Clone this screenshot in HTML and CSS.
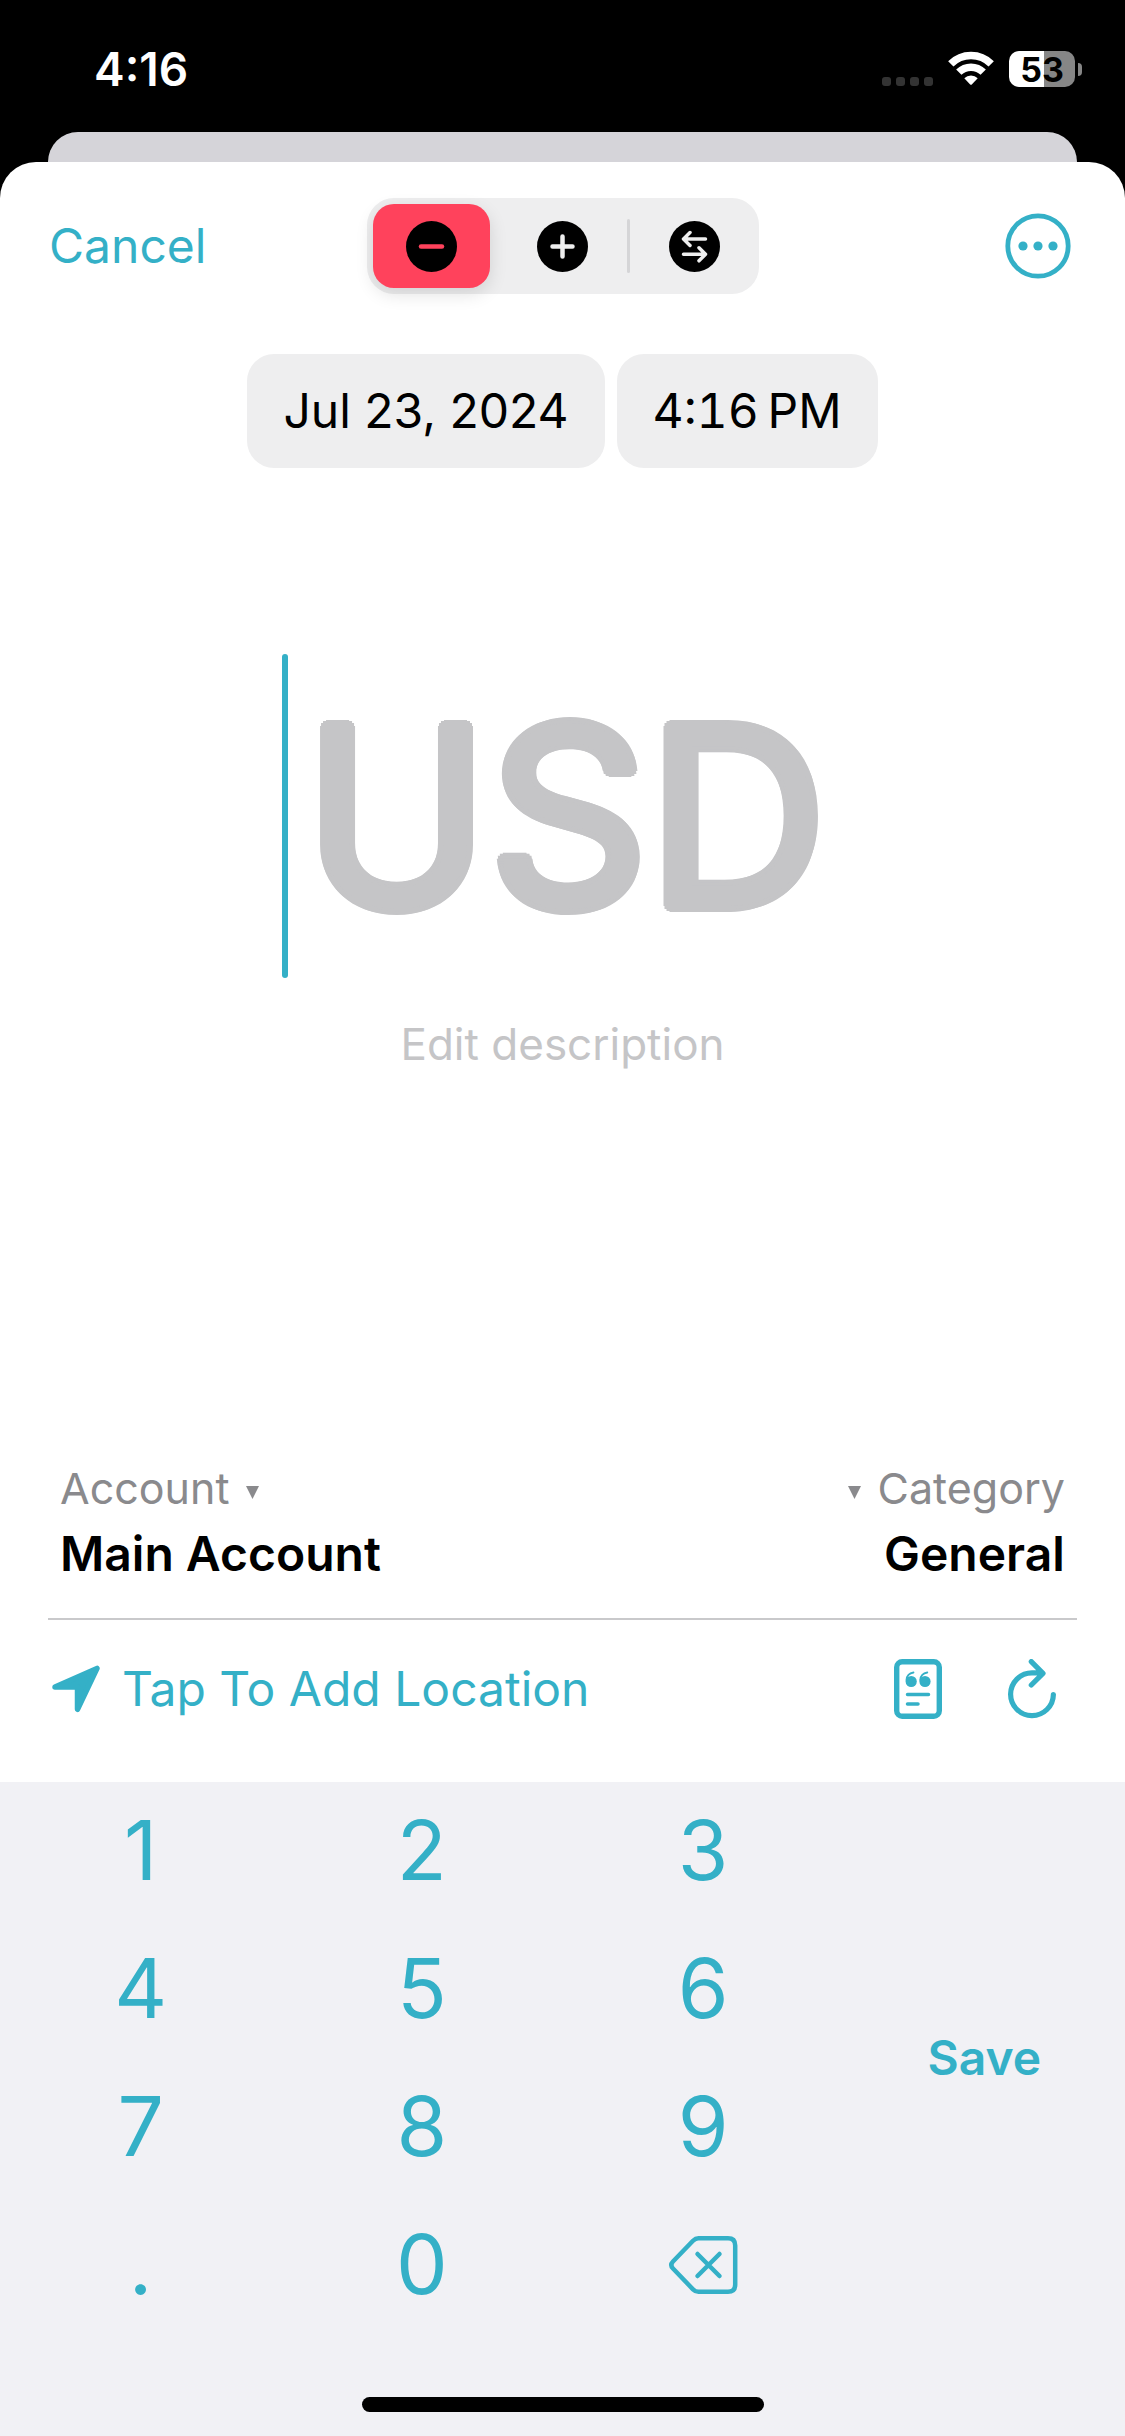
FILE: index.html
```html
<!DOCTYPE html>
<html lang="en">
<head>
<meta charset="utf-8">
<meta name="viewport" content="width=device-width, initial-scale=1">
<title>New Transaction</title>
<link rel="stylesheet" href="styles.css">
</head>
<body>
<div class="status-bar">
  <span class="status-time">4:16</span>
  <div class="status-icons">
    <svg class="signal" viewBox="0 0 52 36" aria-hidden="true"><g fill="#333"><rect x="0" y="26" width="9" height="9" rx="3"/><rect x="14" y="26" width="9" height="9" rx="3"/><rect x="28" y="26" width="9" height="9" rx="3"/><rect x="42" y="26" width="9" height="9" rx="3"/></g></svg>
    <svg class="wifi" viewBox="0 0 46 36" aria-hidden="true"><g fill="none" stroke="#fff" stroke-width="7.500"><path d="M2.800 12.800A28.500 28.500 0 0 1 43.200 12.800"/><path d="M10.800 21.200A17.300 17.300 0 0 1 35.200 21.200"/></g><path d="M16.300 27.300A9.500 9.500 0 0 1 29.700 27.300L23.800 33.400Q23 34.200 22.200 33.400Z" fill="#fff"/></svg>
    <div class="battery"><span class="battery-level">53</span><span class="battery-tip"></span></div>
  </div>
</div>
<div class="back-card"></div>
<main class="sheet">
  <header class="toolbar">
    <button class="link-button cancel" type="button">Cancel</button>
    <div class="segments" role="radiogroup" aria-label="Transaction type">
      <label class="segment segment-first"><input class="segment-input" type="radio" name="type" aria-label="Expense" checked>
        <svg class="segment-icon" viewBox="0 0 51 51" aria-hidden="true"><circle cx="25.500" cy="25.500" r="25.500"/><path d="M15 25.500H36" fill="none" stroke="#ff425c" stroke-width="4.500" stroke-linecap="round"/></svg></label>
      <label class="segment"><input class="segment-input" type="radio" name="type" aria-label="Income">
        <svg class="segment-icon" viewBox="0 0 51 51" aria-hidden="true"><circle cx="25.500" cy="25.500" r="25.500"/><path d="M15.500 25.500H35.500M25.500 15.500V35.500" fill="none" stroke="#eee" stroke-width="4.500" stroke-linecap="round"/></svg></label>
      <span class="segment-divider"></span>
      <label class="segment"><input class="segment-input" type="radio" name="type" aria-label="Transfer">
        <svg class="segment-icon" viewBox="0 0 51 51" aria-hidden="true"><circle cx="25.500" cy="25.500" r="25.500"/><path d="M36.500 18H15M21 11.500L14.500 18L21 24.500M14.500 33.300H36M30 26.800L36.500 33.300L30 39.800" fill="none" stroke="#eee" stroke-width="3.500" stroke-linecap="round" stroke-linejoin="round"/></svg></label>
    </div>
    <button class="icon-button more" type="button" aria-label="More options">
      <svg class="more-icon" viewBox="0 0 66 66" aria-hidden="true"><circle cx="33" cy="33" r="30.200" fill="none" stroke="currentColor" stroke-width="4.800"/><g fill="currentColor"><circle cx="18" cy="33" r="4.600"/><circle cx="33" cy="33" r="4.600"/><circle cx="48" cy="33" r="4.600"/></g></svg>
    </button>
  </header>

  <div class="date-row">
    <button class="pill" type="button">Jul 23, 2024</button>
    <button class="pill pill-time" type="button">4:16&#8239;PM</button>
  </div>

  <div class="amount">
    <span class="caret"></span>
    <input class="amount-input" type="text" inputmode="decimal" placeholder="USD" aria-label="Amount">
  </div>
  <input class="description" type="text" placeholder="Edit description" aria-label="Description">

  <div class="details">
    <div class="field">
      <label class="field-label" for="account">Account
        <svg class="arrow" viewBox="0 0 13 13" aria-hidden="true"><path d="M0 0H13L6.500 13Z" fill="currentColor"/></svg></label>
      <select class="field-select" id="account"><option>Main Account</option></select>
    </div>
    <div class="field field-end">
      <label class="field-label" for="category"><svg class="arrow" viewBox="0 0 13 13" aria-hidden="true"><path d="M0 0H13L6.500 13Z" fill="currentColor"/></svg>
        Category</label>
      <select class="field-select" id="category"><option>General</option></select>
    </div>
  </div>

  <div class="actions">
    <button class="link-button location" type="button">
      <svg class="location-icon" viewBox="0 0 48 48" aria-hidden="true"><path d="M3 22L45 3.400L25.500 44.300V22Z" fill="currentColor" stroke="currentColor" stroke-width="5.500" stroke-linejoin="round"/></svg>
      Tap To Add Location
    </button>
    <div class="action-icons">
      <button class="icon-button" type="button" aria-label="Add note">
        <svg class="action-icon" viewBox="0 0 48 60" aria-hidden="true"><rect x="2.700" y="2.700" width="42.600" height="54.600" rx="5.500" fill="none" stroke="currentColor" stroke-width="5.400"/><g fill="currentColor"><circle cx="17.200" cy="22.500" r="5.600"/><circle cx="31" cy="22.500" r="5.600"/></g><path d="M12.500 21Q13 14.500 19.500 13.500M26.300 21Q26.800 14.500 33.300 13.500" fill="none" stroke="currentColor" stroke-width="1.800" stroke-linecap="round"/><path d="M13.500 35.500H34.500M13.500 45H24" fill="none" stroke="currentColor" stroke-width="3.500" stroke-linecap="round"/></svg>
      </button>
      <button class="icon-button" type="button" aria-label="Repeat">
        <svg class="action-icon" viewBox="0 0 48 60" aria-hidden="true"><path d="M45.400 35.500A21.400 21.400 0 1 1 24 13.800H34M23.300 2.600L35 14.300L23.300 26" fill="none" stroke="currentColor" stroke-width="5.200" stroke-linecap="round" stroke-linejoin="round"/></svg>
      </button>
    </div>
  </div>
</main>
<section class="keyboard" aria-label="Keypad">
  <div class="keys">
    <button class="key" type="button">1</button>
    <button class="key" type="button">2</button>
    <button class="key" type="button">3</button>
    <button class="save" type="submit">Save</button>
    <button class="key" type="button">4</button>
    <button class="key" type="button">5</button>
    <button class="key" type="button">6</button>
    <button class="key" type="button">7</button>
    <button class="key" type="button">8</button>
    <button class="key" type="button">9</button>
    <button class="key" type="button">.</button>
    <button class="key" type="button">0</button>
    <button class="key" type="button" aria-label="Delete"><svg class="delete-icon" viewBox="0 0 70 60" aria-hidden="true"><g fill="none" stroke="currentColor" stroke-width="4.500" stroke-linecap="round" stroke-linejoin="round"><path d="M30.500 3.200H60Q67.200 3.200 67.200 10.400V49.600Q67.200 56.800 60 56.800H30.500Q27.500 56.800 25 54.300L5 33.500Q1.600 30 5 26.500L25 5.700Q27.500 3.200 30.500 3.200Z"/><path d="M29.500 19L51.500 41M51.500 19L29.500 41"/></g></svg></button>
  </div>
  <div class="home-indicator"></div>
</section>
</body>
</html>
```
FILE: styles.css
```css
* {
  box-sizing: border-box;
}

:root {
  --accent: #34b0c7;
  --fill: #eeeeef;
  --placeholder: #c5c5c7;
}

body {
  margin: 0;
  min-height: 100vh;
  display: flex;
  flex-direction: column;
  background: #000;
  color: #000;
  font-family: Inter, "Liberation Sans", sans-serif;
  font-size: 48px;
  line-height: 60px;
}

button,
input,
select {
  margin: 0;
  padding: 0;
  border: 0;
  background: none;
  font: inherit;
  color: inherit;
  outline: none;
}

svg {
  display: block;
  flex: none;
}

/* Status bar */
.status-bar {
  display: flex;
  justify-content: space-between;
  height: 132px;
  padding: 39px 43px 0 94px;
  color: #fff;
}

.status-time {
  font-size: 46px;
  font-weight: 600;
}

.status-icons {
  display: flex;
  align-items: center;
  height: 60px;
}

.signal {
  width: 52px;
  height: 36px;
  margin-right: 14px;
}

.wifi {
  width: 46px;
  height: 36px;
  margin-right: 15px;
}

.battery {
  display: flex;
  align-items: center;
  gap: 3px;
}

.battery-level {
  width: 66px;
  height: 36px;
  border-radius: 10px;
  background: linear-gradient(to right, #fff 53%, #868686 53%);
  color: #000;
  font-size: 34px;
  font-weight: 700;
  line-height: 37px;
  text-align: center;
}

.battery-tip {
  width: 4px;
  height: 13px;
  border-radius: 0 4px 4px 0;
  background: #868686;
}

/* Sheet */
.back-card {
  height: 30px;
  margin: 0 48px;
  border-radius: 30px 30px 0 0;
  background: #d5d4d9;
}

.sheet {
  flex: 1;
  display: flex;
  flex-direction: column;
  padding: 36px 48px 0;
  border-radius: 36px 36px 0 0;
  background: #fff;
}

.toolbar {
  display: grid;
  grid-template-columns: 1fr auto 1fr;
  align-items: center;
}

.link-button {
  justify-self: start;
  color: var(--accent);
}

.cancel {
  margin-left: 1px;
}

.icon-button {
  color: var(--accent);
}

.more {
  justify-self: end;
  margin-right: 6px;
}

.more-icon {
  width: 66px;
  height: 66px;
}

.segments {
  display: flex;
  align-items: center;
  height: 96px;
  padding: 6px;
  border-radius: 27px;
  background: var(--fill);
}

.segment {
  display: flex;
  align-items: center;
  justify-content: center;
  width: 117px;
  height: 84px;
  border-radius: 21px;
}

.segment-first {
  margin-right: 14px;
}

.segment:has(:checked) {
  background: #ff425c;
  box-shadow: 0 6px 18px rgba(0, 0, 0, 0.12);
}

.segment-input {
  appearance: none;
  width: 0;
  height: 0;
}

.segment-icon {
  width: 51px;
  height: 51px;
}

.segment-divider {
  width: 3px;
  height: 54px;
  margin: 0 6px;
  border-radius: 2px;
  background: #d5d5d7;
}

/* Date and time */
.date-row {
  display: flex;
  justify-content: center;
  gap: 12px;
  margin-top: 60px;
}

.pill {
  height: 114px;
  padding: 0 36px;
  border-radius: 27px;
  background: var(--fill);
}

.pill-time {
  font-variant-numeric: tabular-nums;
}

/* Amount */
.amount {
  display: flex;
  align-items: center;
  justify-content: center;
  margin-top: 186px;
}

.caret {
  width: 6px;
  height: 324px;
  border-radius: 3px;
  background: var(--accent);
}

/* The ring of shadows thickens the strokes and rounds their corners. */
.amount-input {
  width: 555px;
  height: 324px;
  font-size: 248px;
  font-weight: 400;
  font-optical-sizing: none;
  line-height: 324px;
  text-align: center;
  text-shadow:
    6px 0 var(--placeholder),
    5px 3px var(--placeholder),
    3px 5px var(--placeholder),
    0 6px var(--placeholder),
    -3px 5px var(--placeholder),
    -5px 3px var(--placeholder),
    -6px 0 var(--placeholder),
    -5px -3px var(--placeholder),
    -3px -5px var(--placeholder),
    0 -6px var(--placeholder),
    3px -5px var(--placeholder),
    5px -3px var(--placeholder);
}

.amount-input::placeholder {
  color: var(--placeholder);
  opacity: 1;
}

.description {
  height: 60px;
  margin-top: 36px;
  font-size: 44px;
  text-align: center;
}

.description::placeholder {
  color: var(--placeholder);
  opacity: 1;
}

/* Account and category */
.details {
  display: flex;
  justify-content: space-between;
  margin-top: auto;
  padding: 0 12px 34px;
  border-bottom: 2px solid #c9c9cb;
}

.field {
  display: flex;
  flex-direction: column;
  align-items: flex-start;
  gap: 6px;
}

.field-end {
  align-items: flex-end;
}

.field-label {
  display: flex;
  align-items: center;
  gap: 17px;
  color: #8a8a8d;
  font-size: 43px;
}

.arrow {
  width: 13px;
  height: 13px;
  margin-top: 8px;
}

.field-select {
  appearance: none;
  height: 60px;
  font-weight: 600;
}

/* Location, note and repeat */
.actions {
  display: flex;
  align-items: center;
  justify-content: space-between;
  padding: 39px 21px 63px 4px;
}

.location {
  display: flex;
  align-items: center;
  gap: 22px;
}

.location-icon {
  width: 48px;
  height: 48px;
}

.action-icons {
  display: flex;
  gap: 66px;
}

.action-icon {
  width: 48px;
  height: 60px;
}

/* Keypad */
.keyboard {
  padding-bottom: 24px;
  background: #f1f1f5;
  color: var(--accent);
}

.keys {
  display: grid;
  grid-template-columns: repeat(4, 1fr);
  grid-auto-rows: 138px;
}

.key {
  display: flex;
  align-items: center;
  justify-content: center;
  font-size: 82px;
}

.save {
  grid-column: 4;
  grid-row: 1 / span 4;
  font-weight: 600;
}

.delete-icon {
  width: 70px;
  height: 60px;
}

.home-indicator {
  width: 402px;
  height: 15px;
  margin: 63px auto 0;
  border-radius: 8px;
  background: #000;
}
```
